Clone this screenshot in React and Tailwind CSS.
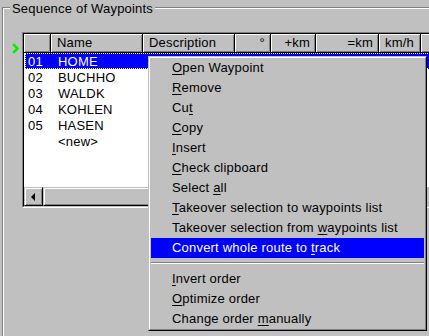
import React from 'react';

const columns = [
  { label: '', cls: 'w-[27px]' },
  { label: 'Name', cls: 'w-[92px]' },
  { label: 'Description', cls: 'w-[92px]' },
  { label: '°', cls: 'w-[36px] text-right' },
  { label: '+km', cls: 'w-[45px] text-right' },
  { label: '=km', cls: 'w-[63px] text-right' },
  { label: 'km/h', cls: 'w-[42px]' },
  { label: '', cls: 'w-[80px]' },
];

const rows = [
  ['01', 'HOME'],
  ['02', 'BUCHHO'],
  ['03', 'WALDK'],
  ['04', 'KOHLEN'],
  ['05', 'HASEN'],
  ['', '<new>'],
];

// [label, index of mnemonic letter, highlighted]
const menuTop = [
  ['Open Waypoint', 0],
  ['Remove', 0],
  ['Cut', 2],
  ['Copy', 0],
  ['Insert', 0],
  ['Check clipboard', 0],
  ['Select all', 7],
  ['Takeover selection to waypoints list', 0],
  ['Takeover selection from waypoints list', 24],
  ['Convert whole route to track', 23, true],
];

const menuBottom = [
  ['Invert order', 0],
  ['Optimize order', 0],
  ['Change order manually', 13],
];

const Mnemonic = ({ text, at }) => (
  <>
    {text.slice(0, at)}
    <span className="underline underline-offset-[2px]">{text[at]}</span>
    {text.slice(at + 1)}
  </>
);

const MenuItem = ({ label, at, active }) => (
  <div
    className={`h-[20px] leading-[20px] pl-[21px] whitespace-nowrap ${
      active ? 'bg-[#0000ff] text-white' : 'text-black'
    }`}
  >
    <Mnemonic text={label} at={at} />
  </div>
);

const raised =
  'border border-t-[#c0c0c0] border-l-[#c0c0c0] border-r-black border-b-black shadow-[inset_1px_1px_0_#fff,inset_-1px_-1px_0_#808080]';

const WaypointList = () => (
  <div className="w-[420px] h-[176px] border border-t-[#808080] border-l-[#808080] border-r-white border-b-white">
    <div className="h-full flex flex-col border border-t-black border-l-black border-r-[#c0c0c0] border-b-[#c0c0c0]">
      <div className="flex h-[19px] shrink-0">
        {columns.map((c, i) => (
          <div
            key={i}
            className={`${c.cls} shrink-0 h-[19px] leading-[18px] pl-[6px] pr-[5px] border-r border-b border-black shadow-[inset_1px_1px_0_#fff,inset_-1px_-1px_0_#808080] whitespace-nowrap overflow-hidden`}
          >
            {c.label}
          </div>
        ))}
      </div>

      <div className="h-[134px] shrink-0 bg-white">
        {rows.map(([num, name], i) => (
          <div
            key={i}
            className={`ml-[1px] h-[16px] pt-[2px] leading-[14px] flex ${
              i === 0
                ? 'bg-[#0000ff] text-white outline-1 outline-dotted outline-[#ffff80] -outline-offset-1'
                : 'text-black'
            }`}
          >
            <span className="w-[33px] pl-[3px] shrink-0">{num}</span>
            <span>{name}</span>
          </div>
        ))}
      </div>

      <div className="h-[19px] shrink-0 flex bg-[#c0c0c0]">
        <div className={`w-[19px] h-full shrink-0 flex items-center justify-center pr-[2px] ${raised}`}>
          <div className="w-0 h-0 border-y-[4px] border-y-transparent border-r-[4px] border-r-black" />
        </div>
        <div className={`w-[300px] h-full shrink-0 ${raised}`} />
      </div>
    </div>
  </div>
);

const App = () => {
  return (
    <div className="relative w-[429px] h-[336px] overflow-hidden bg-[#c0c0c0] text-[13px] tracking-[0.2px] text-black font-['Liberation_Sans',Arial,sans-serif]">
      <div className="relative ml-[2px] mt-[7px] w-[440px] h-[340px] border-t border-l border-[#808080] shadow-[inset_1px_1px_0_#fff]">
        <div className="absolute -top-[8px] left-[7px] px-[2px] leading-[17px] bg-[#c0c0c0] whitespace-nowrap">
          Sequence of Waypoints
        </div>

        <div className="flex pt-[24px] pl-[9px]">
          <svg width="7" height="11" viewBox="0 0 7 11" className="mt-[11px] shrink-0">
            <polyline points="1.2,1.2 5.5,5.5 1.2,9.8" fill="none" stroke="#00f000" strokeWidth="2.6" />
          </svg>
          <div className="ml-[3px]">
            <WaypointList />
          </div>
        </div>
      </div>

      <div className="absolute left-[148px] top-[56px] w-[279px] h-[275px] border border-t-[#c0c0c0] border-l-[#c0c0c0] border-r-black border-b-black">
        <div className="h-full px-[1px] border border-t-white border-l-white border-r-[#808080] border-b-[#808080] bg-[#c0c0c0]">
          {menuTop.map(([label, at, active]) => (
            <MenuItem key={label} label={label} at={at} active={active} />
          ))}
          <div className="h-[11px] pt-[4px]">
            <div className="h-[1px] bg-[#808080]" />
            <div className="h-[1px] bg-white" />
          </div>
          {menuBottom.map(([label, at]) => (
            <MenuItem key={label} label={label} at={at} />
          ))}
        </div>
      </div>
    </div>
  );
};

export default App;
